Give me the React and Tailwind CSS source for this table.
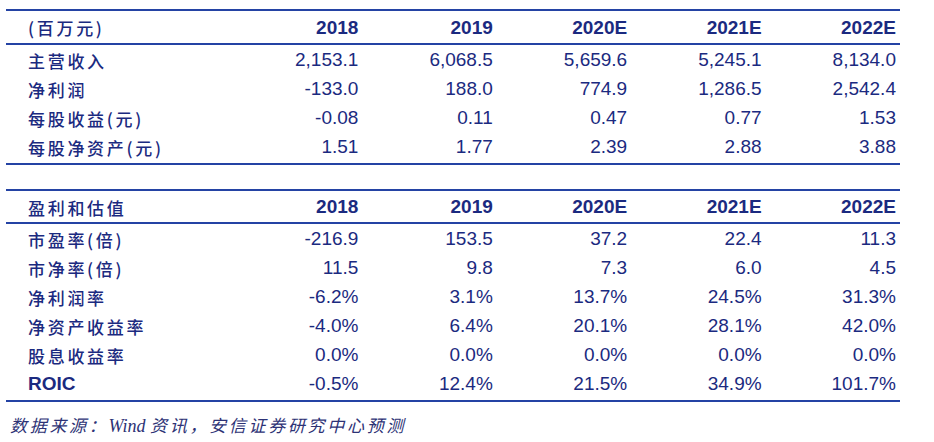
const years = ["2018", "2019", "2020E", "2021E", "2022E"];

const finance = [
  { label: "主营收入", values: ["2,153.1", "6,068.5", "5,659.6", "5,245.1", "8,134.0"] },
  { label: "净利润", values: ["-133.0", "188.0", "774.9", "1,286.5", "2,542.4"] },
  { label: "每股收益(元)", values: ["-0.08", "0.11", "0.47", "0.77", "1.53"] },
  { label: "每股净资产(元)", values: ["1.51", "1.77", "2.39", "2.88", "3.88"] },
];

const valuation = [
  { label: "市盈率(倍)", values: ["-216.9", "153.5", "37.2", "22.4", "11.3"] },
  { label: "市净率(倍)", values: ["11.5", "9.8", "7.3", "6.0", "4.5"] },
  { label: "净利润率", values: ["-6.2%", "3.1%", "13.7%", "24.5%", "31.3%"] },
  { label: "净资产收益率", values: ["-4.0%", "6.4%", "20.1%", "28.1%", "42.0%"] },
  { label: "股息收益率", values: ["0.0%", "0.0%", "0.0%", "0.0%", "0.0%"] },
  { label: "ROIC", values: ["-0.5%", "12.4%", "21.5%", "34.9%", "101.7%"], latin: true },
];

const cjk = "font-['Noto_Sans_CJK_SC',sans-serif] font-medium text-[17px] tracking-[2.7px]";
const num = "font-['Liberation_Sans',Arial,sans-serif] text-[19px] text-right";

function Table({ title, rows, headH }) {
  return (
    <div className="border-y-2 border-[#2443a4] text-[#1b2a80]">
      <div
        className={`grid grid-cols-[218px_repeat(5,1fr)] items-center pr-[4px] pt-[2px] border-b-2 border-[#2443a4] ${headH}`}
      >
        <div className={`pl-[22px] ${cjk}`}>{title}</div>
        {years.map((y) => (
          <div key={y} className={`${num} font-bold`}>
            {y}
          </div>
        ))}
      </div>
      <div className="py-[1px]">
        {rows.map((r) => (
          <div
            key={r.label}
            className="grid grid-cols-[218px_repeat(5,1fr)] items-center h-[29px] pr-[4px]"
          >
            <div
              className={
                r.latin
                  ? "pl-[22px] font-['Liberation_Sans',Arial,sans-serif] text-[19px] font-bold"
                  : `pl-[22px] ${cjk}`
              }
            >
              {r.label}
            </div>
            {r.values.map((v, i) => (
              <div key={i} className={num}>
                {v}
              </div>
            ))}
          </div>
        ))}
      </div>
    </div>
  );
}

export default function App() {
  return (
    <div className="w-[934px] h-[442px] bg-white overflow-hidden">
      <div className="ml-[6px] w-[894px] pt-[9px]">
        {/* TABLE 1 */}
        <Table title="(百万元)" rows={finance} headH="h-[34px]" />

        {/* TABLE 2 */}
        <div className="mt-[24px]">
          <Table title="盈利和估值" rows={valuation} headH="h-[33px]" />
        </div>

        {/* SOURCE */}
        <p className="mt-[12px] ml-[4px] leading-[24px] italic text-[17px] tracking-[2.7px] text-[#2d3275] font-['Liberation_Serif','Noto_Sans_CJK_SC',serif]">
          数据来源：
          <span className="tracking-normal text-[18px] font-['Liberation_Serif',serif]">Wind </span>
          资讯，安信证券研究中心预测
        </p>
      </div>
    </div>
  );
}
